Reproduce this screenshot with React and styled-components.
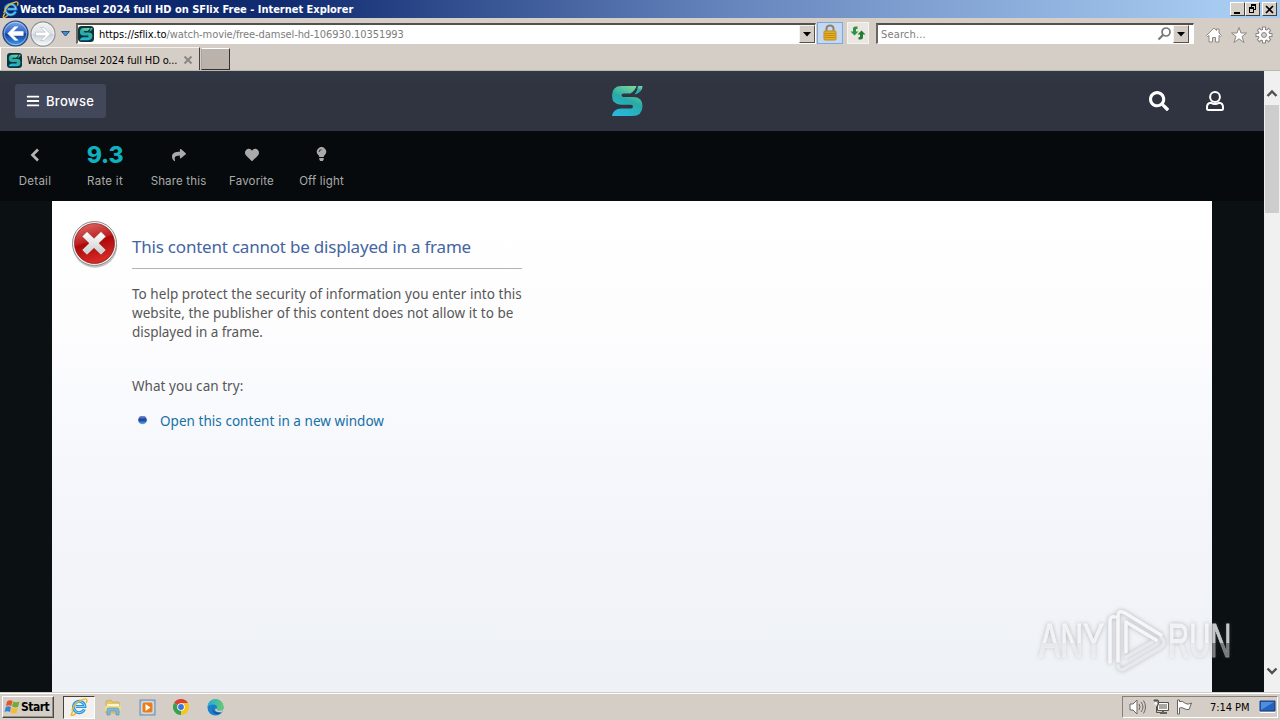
import React from "react";
import styled, { createGlobalStyle, css } from "styled-components";
import { FaBars, FaShare, FaHeart, FaSearch } from "react-icons/fa";

const Global = createGlobalStyle`
  * { box-sizing: border-box; }
  body { margin: 0; overflow: hidden; background: #d5cec6; }
  svg { display: block; flex: none; }
`;

const tahoma = css`font-family: "DejaVu Sans Condensed", "DejaVu Sans", sans-serif; font-stretch: condensed;`;
const segoe = css`font-family: "Noto Sans", "Open Sans", sans-serif;`;
const geometric = css`font-family: Inter, "Open Sans", sans-serif;`;

const Screen = styled.div`
  position: relative;
  width: 1280px;
  height: 720px;
  overflow: hidden;
  display: flex;
  flex-direction: column;
  background: #d5cec6;
`;

const Label = styled.span`
  display: block;
  white-space: nowrap;
  letter-spacing: ${(p) => p.$track || 0}px;
`;

/* Browser chrome */
const TitleBar = styled.header`
  ${tahoma}
  height: 18px;
  flex: none;
  display: flex;
  align-items: center;
  padding: 0 2px 0 2px;
  background: linear-gradient(90deg, #0a246a 0%, #102b70 22%, #6685bd 57%, #a6caf0 95%);
  color: #fff;
  font-size: 11px;
  font-weight: 700;
`;
const TitleText = styled(Label)`flex: 1; line-height: 18px; padding: 1px 0 0 1px;`;
const WindowButtons = styled.div`display: flex; margin-right: 1px;`;
const WindowButton = styled.div`
  width: 15px;
  height: 14px;
  margin-left: ${(p) => p.$gap || 0}px;
  display: grid;
  place-items: center;
  background: #d4d0c8;
  border: 1px solid;
  border-color: #fff #404040 #404040 #fff;
`;
const NavBar = styled.nav`
  height: 29px;
  flex: none;
  display: flex;
  align-items: center;
  padding: 2px 7px 0 2px;
`;
const RoundButtons = styled.div`display: flex; align-items: center; gap: 1px; width: 59px;`;
const Field = styled.div`
  ${tahoma}
  height: 21px;
  width: ${(p) => p.$w}px;
  margin-left: ${(p) => p.$ml}px;
  display: flex;
  align-items: center;
  background: #fff;
  border: 1px solid;
  border-width: 2px 1px 1px 2px;
  border-color: #55504c #fff #fff #6b6662;
  font-size: 11px;
  color: #7d7d7d;
`;
const Address = styled(Label)`flex: 1; padding-left: 5px; b { color: #000; font-weight: 400; }`;
const SearchText = styled(Label)`flex: 1; padding-left: 3px;`;
const DropButton = styled.div`
  width: 16px;
  height: 18px;
  margin-right: ${(p) => p.$mr || 0}px;
  display: grid;
  place-items: center;
  background: #d4cdc6;
  border: 1px solid;
  border-color: #f6f2ee #55504c #55504c #f6f2ee;
`;
const ToolButton = styled.div`
  width: ${(p) => (p.$active ? 26 : 22)}px;
  height: 22px;
  margin: -2px 0 0 ${(p) => (p.$active ? 1 : 4)}px;
  display: grid;
  place-items: center;
  background: ${(p) => (p.$active ? "#c4d8f2" : "#eae7e3")};
  border: 1px solid ${(p) => (p.$active ? "#7ca8e2" : "#f6f4f1")};
`;
const Shortcuts = styled.div`display: flex; margin-left: auto; gap: 7px; padding-top: 2px;`;
const TabStrip = styled.div`
  height: 24px;
  flex: none;
  display: flex;
  align-items: flex-start;
  border-bottom: 1px solid #b9b9b2;
`;
const Tab = styled.div`
  ${tahoma}
  width: 200px;
  height: 23px;
  display: flex;
  align-items: center;
  padding: 2px 6px 0 6px;
  border-left: 1px solid #fff;
  border-top: 1px solid #f4f1ee;
  border-right: 1px solid #45413e;
  font-size: 11px;
  color: #000;
`;
const TabText = styled(Label)`flex: 1; padding-left: 5px;`;
const NewTab = styled.div`
  width: 29px;
  height: 22px;
  margin: 1px 0 0 1px;
  background: #bab2ab;
  border: 1px solid;
  border-color: #fff #35312f #35312f #aaa49e;
`;

/* Site */
const Viewport = styled.div`height: 621px; flex: none; display: flex;`;
const Site = styled.div`
  flex: 1;
  display: flex;
  flex-direction: column;
  background: #0b1013;
`;
const SiteHeader = styled.div`
  ${geometric}
  height: 60px;
  flex: none;
  display: grid;
  grid-template-columns: 1fr 32px 1fr;
  align-items: center;
  padding: 0 40px 0 15px;
  background: linear-gradient(#303944 0, #303440 12px, #303440 100%);
`;
const BrowseButton = styled.div`
  width: 91px;
  height: 34px;
  display: flex;
  align-items: center;
  gap: 6px;
  padding-left: 11px;
  border-radius: 3px;
  background: #42475a;
  color: #fff;
  font-size: 13px;
  font-weight: 500;
`;
const LogoCell = styled.div`margin-left: 7px;`;
const HeaderIcons = styled.div`
  display: flex;
  justify-content: flex-end;
  align-items: center;
  gap: 37px;
  color: #fff;
`;
const ActionBar = styled.div`
  ${geometric}
  height: 70px;
  flex: none;
  display: flex;
  background: #060a0c;
  color: #aaa;
`;
const Action = styled.div`
  width: ${(p) => p.$w}px;
  display: flex;
  flex-direction: column;
  align-items: center;
  font-size: 11.5px;
`;
const ActionTop = styled.div`height: 47px; display: grid; place-items: center;`;
const ActionLabel = styled(Label)`line-height: 14px; margin-top: -4px;`;
const Score = styled.div`
  font-size: 23px;
  font-weight: 800;
  color: #0eb1be;
  letter-spacing: ${(p) => p.$track}px;
`;
const Frame = styled.main`
  ${segoe}
  flex: 1;
  margin: 0 52px;
  padding: 20px 0 0 19px;
  display: flex;
  background: linear-gradient(#fff 0%, #fdfdfe 25%, #f4f6fb 60%, #eef1f5 100%);
  color: #575757;
  font-size: 13.5px;
`;
const Message = styled.section`width: 390px; margin-left: 14px;`;
const Heading = styled.h1`
  margin: 0;
  height: 48px;
  padding-top: 12px;
  border-bottom: 1px solid #b3b3b3;
  font-size: 17px;
  font-weight: 400;
  line-height: 27px;
  color: #4465a2;
`;
const Paragraph = styled.div`margin-top: 16px; line-height: 19px;`;
const Try = styled.div`margin-top: 35px; line-height: 19px;`;
const LinkRow = styled.div`
  display: flex;
  align-items: center;
  margin-top: 16px;
  padding-left: 5px;
  gap: 12px;
  line-height: 19px;
  color: #1570a6;
`;
const ScrollTrack = styled.div`
  width: 16px;
  display: flex;
  flex-direction: column;
  align-items: center;
  justify-content: space-between;
  background: #f0f0f0;
`;
const ScrollTop = styled.div`display: flex; flex-direction: column; align-items: center; padding-top: 18px; gap: 7px;`;
const Thumb = styled.div`width: 14px; height: 108px; background: #cdcdcd;`;
const ScrollBottom = styled.div`padding-bottom: 16px;`;

/* Taskbar */
const Taskbar = styled.footer`
  ${tahoma}
  height: 28px;
  flex: none;
  display: flex;
  align-items: center;
  padding: 1px 2px 0 2px;
  background: #d5cec6;
  border-top: 1px solid #d4cdc5;
  box-shadow: inset 0 1px #fff;
  color: #000;
  font-size: 11px;
`;
const StartButton = styled.div`
  width: 52px;
  height: 22px;
  display: flex;
  align-items: center;
  padding-left: 1px;
  gap: 0;
  border: 1px solid;
  border-color: #fff #4b4744 #4b4744 #fff;
  box-shadow: inset -1px -1px #958f89;
  font-size: 12px;
  font-weight: 700;
`;
const TaskIcon = styled.div`
  width: ${(p) => (p.$active ? 32 : 34)}px;
  height: 23px;
  display: grid;
  place-items: center;
  margin-left: ${(p) => (p.$active ? 9 : 0)}px;
  ${(p) => p.$active && css`
    margin-right: 1px;
    background: #f3f0ed;
    border: 1px solid;
    border-color: #45413e #fff #fff #45413e;
  `}
`;
const Tray = styled.div`
  width: 156px;
  height: 22px;
  margin-left: auto;
  padding: 0 1px 0 6px;
  display: flex;
  align-items: center;
  border: 1px solid;
  border-color: #86807a #fff #fff #86807a;
`;
const TrayIcons = styled.div`display: flex; gap: 7px;`;
const Clock = styled(Label)`flex: 1; padding-left: 17px;`;

/* Overlay mark */
const Watermark = styled.div`
  position: absolute;
  left: 1039px;
  top: 606px;
  width: 200px;
  height: 70px;
  display: flex;
  align-items: center;
  filter: drop-shadow(0 0 2px rgba(80, 80, 95, 0.5));
`;
const MarkText = styled.div`
  width: ${(p) => p.$w}px;
  font: 400 48px/60px "Liberation Sans", sans-serif;
  color: transparent;
  background: linear-gradient(rgba(255,255,255,.75) 0 53%, rgba(255,255,255,.42) 53%);
  -webkit-background-clip: text;
  background-clip: text;
  -webkit-text-stroke: 1px rgba(255, 255, 255, 0.14);
  white-space: nowrap;
`;
const Squeeze = styled.span`
  display: block;
  width: ${(p) => p.$full}px;
  background: inherit;
  -webkit-background-clip: text;
  background-clip: text;
  transform: scaleX(${(p) => p.$sx});
  transform-origin: left center;
`;

const IELogo = ({ size = 16 }) => (
  <svg width={size} height={size} viewBox="0 0 20 20">
    <path d="M16 12.5A6.3 6.3 0 1 1 16.5 9.5H6.5" fill="none" stroke="#2a94d6" strokeWidth="3.3" />
    <path d="M16 12.5A6.3 6.3 0 1 1 16.5 9.5H6.5" fill="none" stroke="#9bdcfa" strokeWidth="1" />
    <path d="M3.2 14.5C-.5 21 2 20.5 7 16.8M2 14C4 8 10 2 16.5 1c3-.4 2.5 2.6 1.5 4.5" fill="none" stroke="#e9b72e" strokeWidth="1.6" />
  </svg>
);

const SLogo = ({ size = 32, boxed }) => (
  <svg width={size} height={size} viewBox="0 0 32 32">
    <defs>
      <linearGradient id={boxed ? "sb" : "sl"} x1=".75" y1="0" x2=".3" y2="1">
        <stop offset="0" stopColor="#7cd79e" />
        <stop offset=".48" stopColor="#28aaa6" />
        <stop offset="1" stopColor="#27b9dc" />
      </linearGradient>
    </defs>
    {boxed && <rect width="32" height="32" rx="7" fill="#0c343b" />}
    <g fill={`url(#${boxed ? "sb" : "sl"})`} transform={boxed ? "translate(3 3) scale(.82)" : undefined}>
      <path d="M10.500 1H25.500Q24 6 19.500 8.500H12.500Q10.500 8.500 10.500 10.200T12.500 12H22Q31.500 12 31.500 21 31.500 31 21 31H1Q2.500 23.500 10 23.500H20Q22 23.500 22 21.700T20 19.700H10Q1 19.700 1 10.500 1 1 10.500 1Z" />
      <path d="M27 1H31.500Q31.500 7.500 23.500 9.500 26.500 6 27 1Z" />
    </g>
  </svg>
);

const RoundArrow = ({ size, forward }) => (
  <svg width={size} height={size} viewBox="0 0 28 28">
    <defs>
      <linearGradient id={forward ? "rf" : "rb"} x1="0" y1="0" x2="0" y2="1">
        <stop offset="0" stopColor={forward ? "#f0f1f2" : "#7aa9e8"} />
        <stop offset=".48" stopColor={forward ? "#dfe2e6" : "#2c62c4"} />
        <stop offset=".52" stopColor={forward ? "#cbd2da" : "#123e9d"} />
        <stop offset="1" stopColor={forward ? "#f8fafc" : "#42a1ee"} />
      </linearGradient>
    </defs>
    <circle cx="14" cy="14" r="13" fill={`url(#${forward ? "rf" : "rb"})`} stroke={forward ? "#8b9299" : "#26467f"} strokeWidth="1.2" />
    <circle cx="14" cy="14" r="11.6" fill="none" stroke="#fff" strokeOpacity=".45" />
    <path transform={forward ? "rotate(180 14 14)" : undefined} d="M6 14l7-7h3.500l-5 5H22v4H11.500l5 5H13z" fill="#fff" stroke={forward ? "#a7b1bb" : "#fff"} strokeWidth=".6" />
  </svg>
);

const Caret = () => <svg width="8" height="5"><path d="M0 0h8L4 4.5z" fill="#000" /></svg>;
const Chevron = ({ down }) => (
  <svg width="12" height="9" viewBox="0 0 12 9">
    <path d={down ? "M1.500 1.500L6 6l4.500-4.500" : "M1.500 7L6 2.500 10.500 7"} fill="none" stroke="#505050" strokeWidth="2.4" />
  </svg>
);

export default function App() {
  return (
    <Screen>
      <Global />
      <TitleBar>
        <IELogo size={17} />
        <TitleText $track={-0.02}>Watch Damsel 2024 full HD on SFlix Free - Internet Explorer</TitleText>
        <WindowButtons>
          <WindowButton><svg width="9" height="9"><path d="M1 8h6" stroke="#000" strokeWidth="2" /></svg></WindowButton>
          <WindowButton>
            <svg width="9" height="10" shapeRendering="crispEdges"><path d="M3.500 3V1.500h4v4H6M1.500 4.500h4v4h-4z" fill="none" stroke="#000" /><path d="M3 1h5M1 4h5" stroke="#000" strokeWidth="2" /></svg>
          </WindowButton>
          <WindowButton $gap={2}><svg width="9" height="9"><path d="M1 1l7 7M8 1L1 8" stroke="#000" strokeWidth="1.7" /></svg></WindowButton>
        </WindowButtons>
      </TitleBar>

      <NavBar>
        <RoundButtons><RoundArrow size={27} /><RoundArrow size={26} forward /></RoundButtons>
        <svg width="9" height="6"><path d="M.5.5h8L4.500 5z" fill="#4a8bd0" stroke="#244f87" /></svg>
        <Field $w={740} $ml={6}>
          <SLogo size={16} boxed />
          <Address $track={-0.07}><b>https://sflix.to</b>/watch-movie/free-damsel-hd-106930.10351993</Address>
          <DropButton><Caret /></DropButton>
        </Field>
        <ToolButton $active>
          <svg width="16" height="17" viewBox="0 0 16 17">
            <path d="M4.500 8V4.500a3.500 3 0 0 1 7 0V8" fill="none" stroke="#8f8566" strokeWidth="2" />
            <rect x="2" y="7" width="12" height="9" rx="1" fill="#e5ae22" stroke="#c08d1c" />
            <path d="M3 9.500h10M3 11.500h10M3 13.500h10" stroke="#b57f12" strokeWidth=".7" />
          </svg>
        </ToolButton>
        <ToolButton>
          <svg width="16" height="16" viewBox="0 0 16 16">
            <path d="M7 2v2.500H5.500V7H8L4 11 0 7h2.500V4Q2.500 2 5 2z" transform="translate(.5 -.5)" fill="#2f943e" />
            <path d="M9 14v-2.500h1.500V9H8l4-4 4 4h-2.500v3q0 2-2.500 2z" transform="translate(-.5 .5)" fill="#237d32" />
          </svg>
        </ToolButton>
        <Field $w={318} $ml={7}>
          <SearchText $track={0.15}>Search...</SearchText>
          <svg width="16" height="16" viewBox="0 0 16 16"><circle cx="9" cy="6" r="4" fill="none" stroke="#777" strokeWidth="1.7" /><path d="M6 9l-4.500 4.500" stroke="#777" strokeWidth="2.2" /></svg>
          <DropButton $mr={4}><Caret /></DropButton>
        </Field>
        <Shortcuts>
          <svg width="18" height="18" viewBox="0 0 18 18"><path d="M1.500 9.500L9 2l2.500 2.500V3H14v4l2.500 2.500-1 1L14 9.500V16h-3.500v-4.500h-3V16H4V9.500l-1.500 1z" fill="#fff" stroke="#8c8884" /></svg>
          <svg width="18" height="18" viewBox="0 0 18 18"><path d="M9 1.500l2 5.500h5.500L12 10.500l2 6-5-3.700-5 3.700 2-6L1.500 7H7z" fill="#fff" stroke="#8c8884" /></svg>
          <svg width="18" height="18" viewBox="0 0 18 18">
            <g stroke="#8c8884" strokeWidth="4"><path d="M9 .5v17M.5 9h17M3 3l12 12M15 3L3 15" /></g>
            <circle cx="9" cy="9" r="6.300" fill="#8c8884" />
            <g stroke="#fff" strokeWidth="2"><path d="M9 1.500v15M1.500 9h15M3.700 3.700l10.600 10.600M14.300 3.700L3.700 14.300" /></g>
            <circle cx="9" cy="9" r="5.300" fill="#fff" />
            <circle cx="9" cy="9" r="2.500" fill="#d5cec6" stroke="#8c8884" />
          </svg>
        </Shortcuts>
      </NavBar>

      <TabStrip>
        <Tab>
          <SLogo size={15} boxed />
          <TabText $track={-0.14}>Watch Damsel 2024 full HD o...</TabText>
          <svg width="10" height="10"><path d="M1.500 1.500l7 7m0-7l-7 7" stroke="#8b8782" strokeWidth="2" /></svg>
        </Tab>
        <NewTab />
      </TabStrip>

      <Viewport>
        <Site>
          <SiteHeader>
            <BrowseButton><FaBars size={14} /><Label $track={0.3}>Browse</Label></BrowseButton>
            <LogoCell><SLogo size={32} /></LogoCell>
            <HeaderIcons>
              <FaSearch size={20} />
              <svg width="18" height="20" viewBox="0 0 18 20">
                <g fill="none" stroke="#fff" strokeWidth="2">
                  <circle cx="9" cy="6" r="4.900" />
                  <path d="M5 11.800Q1 12.300 1 16v1.500Q1 19 2.500 19h13Q17 19 17 17.500V16Q17 12.300 13 11.800 11 12.900 9 12.900T5 11.800z" />
                </g>
              </svg>
            </HeaderIcons>
          </SiteHeader>
          <ActionBar>
            <Action $w={70}>
              <ActionTop><svg width="10" height="14" viewBox="0 0 10 14"><path d="M8 1.500L2.500 7 8 12.500" fill="none" stroke="#b4b4b4" strokeWidth="2.7" /></svg></ActionTop>
              <ActionLabel $track={0.25}>Detail</ActionLabel>
            </Action>
            <Action $w={70}><ActionTop><Score $track={-0.2}>9.3</Score></ActionTop><ActionLabel $track={0.28}>Rate it</ActionLabel></Action>
            <Action $w={77}><ActionTop><FaShare size={14} /></ActionTop><ActionLabel $track={0.16}>Share this</ActionLabel></Action>
            <Action $w={69}><ActionTop><FaHeart size={14} /></ActionTop><ActionLabel $track={0.16}>Favorite</ActionLabel></Action>
            <Action $w={71}>
              <ActionTop>
                <svg width="11" height="15" viewBox="0 0 11 15">
                  <path d="M3.300 10Q3.300 8.800 2 7.700A4.600 4.600 0 1 1 9 7.700Q7.700 8.800 7.700 10zM3.300 11h4.400v1.500L6.800 14H4.200l-.9-1.500z" fill="#aaa" />
                  <path d="M3 5Q3 2.700 5.500 2.700" fill="none" stroke="#060a0c" strokeWidth=".8" />
                </svg>
              </ActionTop>
              <ActionLabel $track={0.16}>Off light</ActionLabel>
            </Action>
          </ActionBar>
          <Frame>
            <svg width="47" height="48" viewBox="0 0 47 48">
              <defs>
                <linearGradient id="err" x1="0" y1="0" x2=".3" y2="1">
                  <stop offset="0" stopColor="#dd7470" /><stop offset=".5" stopColor="#bd1e20" /><stop offset=".55" stopColor="#ad0609" /><stop offset="1" stopColor="#d42a25" />
                </linearGradient>
                <linearGradient id="cross" x1="0" y1="0" x2="0" y2="1"><stop offset="0" stopColor="#fff" /><stop offset="1" stopColor="#cbcbcb" /></linearGradient>
              </defs>
              <circle cx="24" cy="24.500" r="22.300" fill="#888" opacity=".5" />
              <circle cx="23.500" cy="22.500" r="22" fill="#f1f1f1" stroke="#8d8d8d" />
              <circle cx="23.500" cy="22.500" r="20" fill="url(#err)" stroke="#8d1112" strokeWidth=".7" />
              <path d="M16 10.500l7 6.800 7-6.800 5 5-7 6.700 7 6.800-5 5-7-6.800-7 6.800-5-5 7-6.800-7-6.700z" fill="url(#cross)" stroke="#94201f" strokeWidth=".5" strokeLinejoin="round" />
            </svg>
            <Message>
              <Heading><Label $track={-0.21}>This content cannot be displayed in a frame</Label></Heading>
              <Paragraph>
                <Label $track={0.04}>To help protect the security of information you enter into this</Label>
                <Label $track={0.04}>website, the publisher of this content does not allow it to be</Label>
                <Label $track={-0.04}>displayed in a frame.</Label>
              </Paragraph>
              <Try><Label $track={0.04}>What you can try:</Label></Try>
              <LinkRow>
                <svg width="11" height="11" viewBox="0 0 11 11"><defs><linearGradient id="dot" x1="0" y1="0" x2="0" y2="1"><stop offset="0" stopColor="#8797ce" /><stop offset=".5" stopColor="#173b9e" /><stop offset="1" stopColor="#54b5ef" /></linearGradient></defs><circle cx="5.500" cy="3.900" r="4.300" fill="url(#dot)" /></svg>
                <Label $track={0.04}>Open this content in a new window</Label>
              </LinkRow>
            </Message>
          </Frame>
        </Site>
        <ScrollTrack>
          <ScrollTop><Chevron /><Thumb /></ScrollTop>
          <ScrollBottom><Chevron down /></ScrollBottom>
        </ScrollTrack>
      </Viewport>

      <Taskbar>
        <StartButton>
          <svg width="17" height="16" viewBox="0 0 17 16">
            <path d="M3 2.500Q6 .5 8.500 2L7.300 7Q5 5.500 2 7z" fill="#e5532a" />
            <path d="M9.300 2.500Q12 4 15.500 2.500L14 8Q11 9 8 7.500z" fill="#70ac37" />
            <path d="M1.800 8Q4.500 6.500 7 8L6 13Q3 11.500.5 13z" fill="#3b83d2" />
            <path d="M7.800 8.500Q10.500 10 13.800 9L12.500 14Q9 15 6.700 13.500z" fill="#f3bc31" />
          </svg>
          <Label $track={-0.5}>Start</Label>
        </StartButton>
        <TaskIcon $active><IELogo size={18} /></TaskIcon>
        <TaskIcon>
          <svg width="18" height="18" viewBox="0 0 18 18">
            <path d="M2 3l5-1 1 2h7v11H2z" fill="#e7c868" stroke="#bda14c" strokeWidth=".6" />
            <path d="M3 6h12v4H3z" fill="#fff4c8" /><path d="M1 8h16v5H1z" fill="#f1da85" />
            <path d="M3 17v-5q0-2 2-2h8q2 0 2 2v5h-3v-4H6v4z" fill="#7dbbdc" stroke="#528fb1" strokeWidth=".6" />
          </svg>
        </TaskIcon>
        <TaskIcon>
          <svg width="17" height="17" viewBox="0 0 17 17"><rect x="1" y="1" width="15" height="15" fill="#a9cdec" stroke="#678db5" /><rect x="3" y="3" width="11" height="11" rx="2" fill="#ed7c18" stroke="#fff" strokeWidth=".7" /><path d="M6.500 5l5 3.500-5 3.500z" fill="#fff" /></svg>
        </TaskIcon>
        <TaskIcon>
          <svg width="16" height="16" viewBox="0 0 16 16">
            <path d="M8 8L1.070 4A8 8 0 0 1 14.930 4z" fill="#df3e32" /><path d="M8 8L14.930 4A8 8 0 0 1 8 16z" fill="#f8c51b" /><path d="M8 8V16A8 8 0 0 1 1.070 4z" fill="#35a151" />
            <path d="M8 4h7l.5 2H9z" fill="#f8c51b" /><circle cx="8" cy="8" r="3.800" fill="#fff" /><circle cx="8" cy="8" r="2.900" fill="#3976df" />
          </svg>
        </TaskIcon>
        <TaskIcon>
          <svg width="17" height="17" viewBox="0 0 17 17">
            <defs><linearGradient id="edge" x1="0" y1="0" x2="1" y2=".2"><stop offset="0" stopColor="#2aa7dc" /><stop offset="1" stopColor="#5bcc75" /></linearGradient></defs>
            <circle cx="8.500" cy="8.500" r="8" fill="#1b7fcb" />
            <path d="M.5 8A8 8 0 0 1 16.500 8Q16.500 11.500 12.500 11.500 9 11.500 10 9.500 10.500 5.500 6.500 5.500 2 5.500.5 8z" fill="url(#edge)" />
            <path d="M7 7Q5 8 6 11T14 13.500Q11 16 8 14.500 3 12 7 7z" fill="#155299" />
            <path d="M10 9.500Q9 11.500 12.500 11.500 15 11.500 16.500 10L15 13Q8.500 14 8 10z" fill="#d5cec6" />
          </svg>
        </TaskIcon>
        <Tray>
          <TrayIcons>
            <svg width="17" height="16" viewBox="0 0 17 16"><path d="M1 5h3l4-4v14l-4-4H1z" fill="#fff" stroke="#6a6663" /><path d="M10 5q2 3 0 6M12 3q4 5 0 10M14.500 1.500q4 6.500 0 13" fill="none" stroke="#6a6663" /></svg>
            <svg width="16" height="16" viewBox="0 0 16 16"><path d="M4.500 3.500h11v8h-11z" fill="#aaa6a1" stroke="#55514e" /><path d="M5.500 4.500h9v6h-9z" fill="none" stroke="#fff" /><path d="M7 14h7M10 12v2" stroke="#65615e" strokeWidth="2" /><path d="M.5 1.500h5v4q-1 2-2 2v6h4M2 0v3M4 0v3" fill="none" stroke="#55514e" /><path d="M1.500 3.500h3v2h-3z" fill="#fff" /></svg>
            <svg width="17" height="16" viewBox="0 0 17 16"><path d="M1.500 1v14h2V9Q6 8 8 9.500t5 1L15.500 4Q12 6 9.500 4.500 6.500 1.500 3.500 2.500V1z" fill="#fff" stroke="#68635f" /></svg>
          </TrayIcons>
          <Clock $track={-0.05}>7:14 PM</Clock>
          <svg width="17" height="16" viewBox="0 0 17 16"><path d="M1 2h15v10H1z" fill="#2462bf" stroke="#183c7f" /><path d="M2 3h13L2 11z" fill="#5fa2e9" opacity=".7" /><path d="M1 13.500h15" stroke="#fff" /></svg>
        </Tray>
      </Taskbar>

      <Watermark>
        <MarkText $w={67}><Squeeze $full={100} $sx={0.66}>ANY</Squeeze></MarkText>
        <svg width="62" height="66" viewBox="0 0 62 66">
          <g fill="none" strokeLinecap="round" strokeLinejoin="round">
            <path d="M4 54V13Q4 8 9 9M12 53V9Q12 1 19 5L55 27M50 32L20 14V44" stroke="#fff" strokeOpacity=".82" strokeWidth="3.500" />
            <path d="M12 58Q14 64 20 60L54 40Q61 35 55 29M20 49L46 34" stroke="#f1f2f4" strokeOpacity=".7" strokeWidth="3.500" />
          </g>
        </svg>
        <MarkText $w={64}><Squeeze $full={106} $sx={0.61}>RUN</Squeeze></MarkText>
      </Watermark>
    </Screen>
  );
}
